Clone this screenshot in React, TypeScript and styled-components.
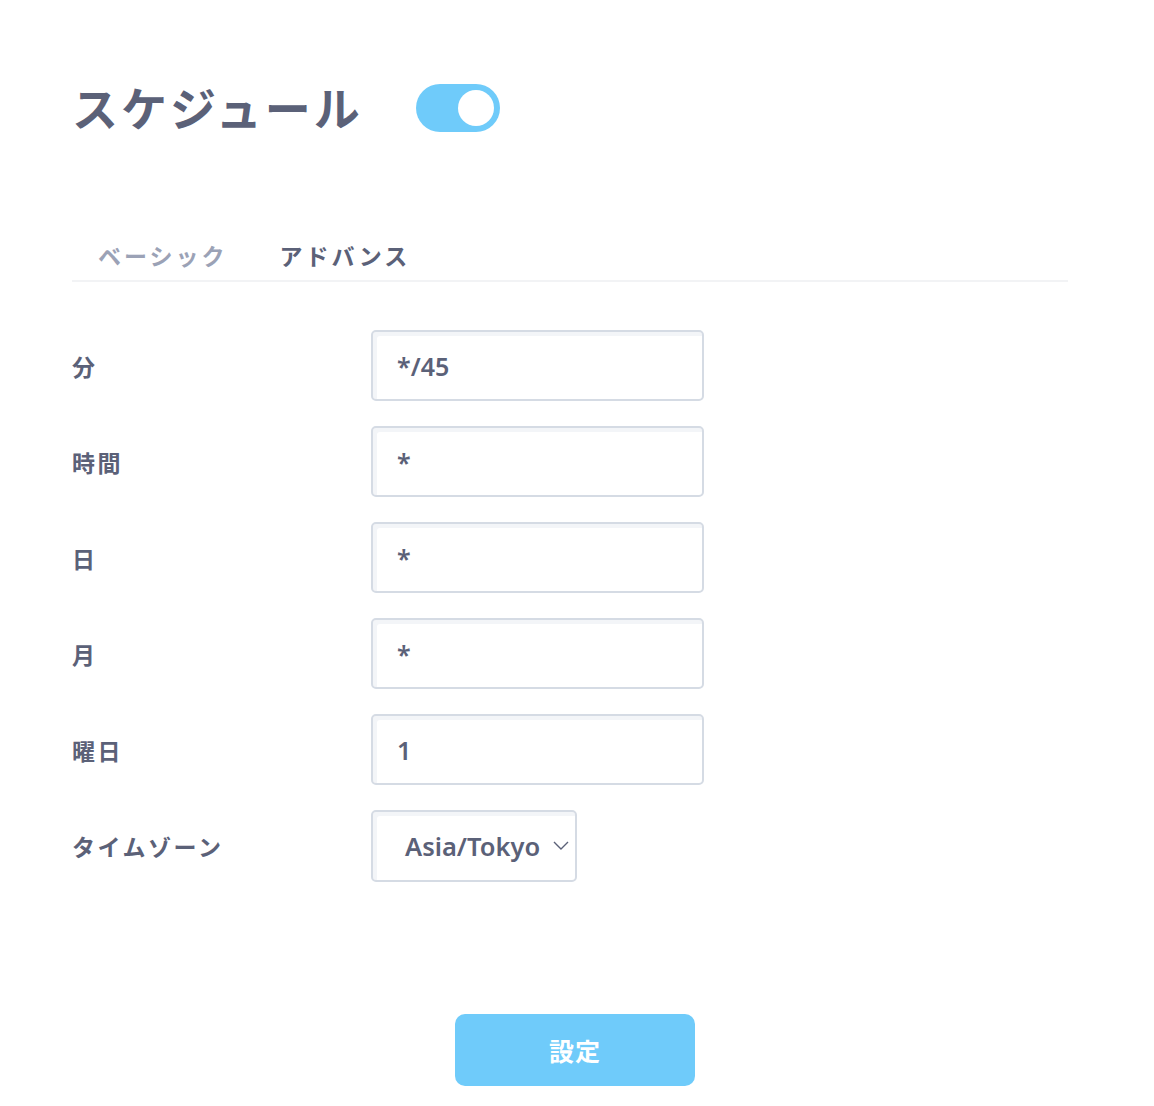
import React, { useState } from "react";
import styled, { createGlobalStyle } from "styled-components";

const GlobalStyle = createGlobalStyle`
  html, body {
    margin: 0;
    padding: 0;
    background: #ffffff;
    font-family: "Noto Sans", "Noto Sans CJK JP", sans-serif;
    color: #5b6178;
  }
  * { box-sizing: border-box; }
`;

const Page = styled.div`
  width: 1154px;
  min-height: 1106px;
  padding: 84px 86px 0 72px;
`;

const Header = styled.div`
  display: flex;
  align-items: center;
  gap: 53px;
  height: 48px;
`;

const Title = styled.h1`
  margin: 0;
  font-size: 46px;
  font-weight: 700;
  letter-spacing: 3px;
  line-height: 1;
  color: #5b6178;
`;

const Toggle = styled.button<{ $on: boolean }>`
  width: 84px;
  height: 48px;
  border-radius: 24px;
  border: none;
  background: ${(p) => (p.$on ? "#6fcbfa" : "#d5dbe3")};
  display: flex;
  align-items: center;
  justify-content: ${(p) => (p.$on ? "flex-end" : "flex-start")};
  padding: 0 6px;
  cursor: pointer;
`;

const Knob = styled.span`
  width: 36px;
  height: 36px;
  border-radius: 50%;
  background: #ffffff;
`;

const Tabs = styled.div`
  display: flex;
  gap: 52px;
  margin-top: 107px;
  padding: 0 0 7px 26px;
  border-bottom: 2px solid #f2f3f5;
`;

const Tab = styled.div<{ $active: boolean }>`
  font-size: 23px;
  font-weight: 700;
  letter-spacing: 3px;
  line-height: 34px;
  color: ${(p) => (p.$active ? "#5b6178" : "#9ba2b6")};
  cursor: pointer;
`;

const Form = styled.div`
  display: flex;
  flex-direction: column;
  gap: 25px;
  margin-top: 48px;
`;

const Row = styled.div`
  display: grid;
  grid-template-columns: 299px auto;
  align-items: center;
`;

const Label = styled.div`
  font-size: 23px;
  font-weight: 700;
  letter-spacing: 2.5px;
  color: #5b6178;
`;

const Field = styled.input`
  width: 333px;
  height: 71px;
  border: 2px solid #d5dbe4;
  border-radius: 5px;
  box-shadow: inset 4px 4px 0 #f3f5f8;
  padding: 0 0 0 24px;
  font-family: "Noto Sans", "Noto Sans CJK JP", sans-serif;
  font-size: 25px;
  font-weight: 600;
  color: #5b6178;
  outline: none;
`;

const SelectBox = styled.label`
  display: inline-flex;
  align-items: center;
  width: 206px;
  height: 72px;
  border: 2px solid #d5dbe4;
  border-radius: 5px;
  box-shadow: inset 4px 4px 0 #f3f5f8;
  padding: 0 0 0 32px;
  gap: 12px;
  font-size: 25.5px;
  font-weight: 600;
  color: #5b6178;
`;

const Chevron = styled.svg`
  width: 18px;
  height: 18px;
  margin-top: -2px;
`;

const Footer = styled.div`
  display: flex;
  justify-content: center;
  margin: 132px 0 0 -74px;
  width: 1154px;
`;

const Submit = styled.button`
  width: 240px;
  height: 72px;
  border: none;
  border-radius: 10px;
  background: #6fcbfa;
  color: #ffffff;
  font-family: "Noto Sans CJK JP", sans-serif;
  font-size: 25px;
  font-weight: 700;
  letter-spacing: 1px;
  cursor: pointer;
`;

const fields = [
  { label: "分", value: "*/45" },
  { label: "時間", value: "*" },
  { label: "日", value: "*" },
  { label: "月", value: "*" },
  { label: "曜日", value: "1" },
];

export default function App() {
  const [on, setOn] = useState(true);
  const [tab, setTab] = useState(1);
  return (
    <Page>
      <GlobalStyle />
      <Header>
        <Title>スケジュール</Title>
        <Toggle $on={on} onClick={() => setOn(!on)}>
          <Knob />
        </Toggle>
      </Header>
      <Tabs>
        {["ベーシック", "アドバンス"].map((t, i) => (
          <Tab key={t} $active={tab === i} onClick={() => setTab(i)}>
            {t}
          </Tab>
        ))}
      </Tabs>
      <Form>
        {fields.map((f) => (
          <Row key={f.label}>
            <Label>{f.label}</Label>
            <Field defaultValue={f.value} />
          </Row>
        ))}
        <Row>
          <Label>タイムゾーン</Label>
          <SelectBox>
            Asia/Tokyo
            <Chevron viewBox="0 0 18 18" fill="none" stroke="#5b6178" strokeWidth="1.4">
              <path d="M2 6l7 7 7-7" />
            </Chevron>
          </SelectBox>
        </Row>
      </Form>
      <Footer>
        <Submit>設定</Submit>
      </Footer>
    </Page>
  );
}
